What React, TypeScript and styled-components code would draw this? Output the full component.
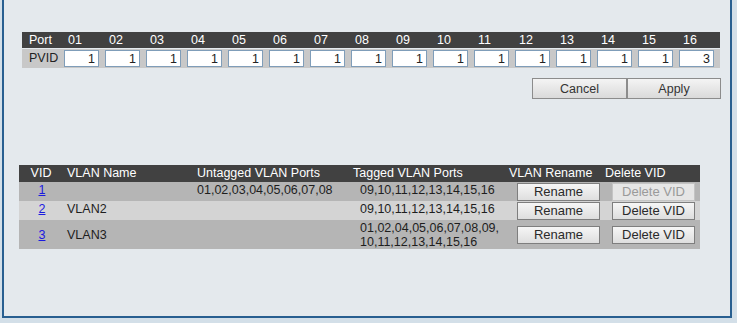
import { Fragment } from 'react';
import styled, { createGlobalStyle } from 'styled-components';

const GlobalStyle = createGlobalStyle`
  html, body {
    margin: 0;
    padding: 0;
    background: #d3dfe8;
    font-family: 'Liberation Sans', Arial, sans-serif;
    font-size: 12px;
  }
`;

const Page = styled.div`
  height: 323px;
  overflow: hidden;
  padding-left: 2px;
`;

const Panel = styled.div`
  box-sizing: border-box;
  width: 730px;
  height: 318px;
  padding: 32px 0 0 18px;
  background: #e4e9ed;
  border: 2px solid #285f90;
  border-top: none;
`;

const PortGrid = styled.div`
  display: grid;
  grid-template-columns: 42px repeat(16, 41px);
  width: 699px;
`;

const HeadCell = styled.div<{ $first?: boolean }>`
  height: 16px;
  line-height: 16px;
  padding-left: ${(p) => (p.$first ? '7px' : '4px')};
  background: #414141;
  color: #fff;
  font-size: 12.5px;
`;

const PvidCell = styled.div<{ $first?: boolean }>`
  height: 19px;
  padding: 1px 0 0 ${(p) => (p.$first ? '7px' : '0')};
  box-sizing: border-box;
  margin-top: 1px;
  background: #c8c8c8;
  color: #222;
  line-height: 17px;
  font-size: 12.5px;
`;

const PvidInput = styled.input`
  box-sizing: border-box;
  width: 35px;
  height: 17px;
  margin: 0;
  padding: 0 3px 0 0;
  border: 1px solid #7f9db9;
  background: #fff;
  text-align: right;
  font-family: 'Liberation Sans', Arial, sans-serif;
  font-size: 12.5px;
  color: #222;
`;

const ActionRow = styled.div`
  display: flex;
  justify-content: flex-end;
  width: 699px;
  margin-top: 10px;
`;

const ActionButton = styled.button<{ $w: number }>`
  box-sizing: border-box;
  width: ${(p) => p.$w}px;
  height: 21px;
  margin: 0;
  padding: 0;
  border: 1px solid #8c8c8c;
  background: linear-gradient(#f4f4f4, #dadada);
  color: #333;
  font-family: 'Liberation Sans', Arial, sans-serif;
  font-size: 12.5px;
`;

const VlanTable = styled.div`
  display: grid;
  grid-template-columns: 44px 130px 156px 156px 96px 99px;
  width: 681px;
  margin: 66px 0 0 -3px;
`;

const VlanHead = styled.div<{ $center?: boolean }>`
  height: 17px;
  line-height: 17px;
  padding-left: ${(p) => (p.$center ? '0' : '4px')};
  text-align: ${(p) => (p.$center ? 'center' : 'left')};
  background: #414141;
  color: #fff;
  font-size: 12.5px;
  white-space: nowrap;
`;

const VlanCell = styled.div<{ $shade: boolean; $tall: boolean; $pad?: number; $center?: boolean }>`
  display: flex;
  align-items: ${(p) => (p.$tall ? 'center' : 'flex-start')};
  justify-content: ${(p) => (p.$center ? 'center' : 'flex-start')};
  height: ${(p) => (p.$tall ? '29px' : '19px')};
  box-sizing: border-box;
  padding: ${(p) => (p.$tall ? '0' : '1px')} 0 0 ${(p) => p.$pad ?? 4}px;
  background: ${(p) => (p.$shade ? '#b5b5b5' : '#d4d4d4')};
  color: #1e1e1e;
  font-size: 12.5px;
  line-height: 14px;
`;

const PortList = styled.span`
  white-space: pre-line;
`;

const VidLink = styled.a`
  color: #1a1ae0;
  text-decoration: underline;
  padding-left: 2px;
`;

const RowButton = styled.button<{ $off?: boolean }>`
  box-sizing: border-box;
  width: 83px;
  height: 18px;
  margin: 0;
  padding: 0;
  border: 1px solid ${(p) => (p.$off ? '#c4c4c4' : '#7e7e7e')};
  background: ${(p) =>
    p.$off ? '#e6e6e6' : 'linear-gradient(#f6f6f6, #dedede)'};
  color: ${(p) => (p.$off ? '#9a9a9a' : '#2a2a2a')};
  font-family: 'Liberation Sans', Arial, sans-serif;
  font-size: 13px;
  line-height: 16px;
`;

const ports = Array.from({ length: 16 }, (_, i) => String(i + 1).padStart(2, '0'));
const pvids = ports.map((_, i) => (i === 15 ? '3' : '1'));

const vlans = [
  { vid: 1, name: '', untagged: '01,02,03,04,05,06,07,08', tagged: '09,10,11,12,13,14,15,16', canDelete: false },
  { vid: 2, name: 'VLAN2', untagged: '', tagged: '09,10,11,12,13,14,15,16', canDelete: true },
  { vid: 3, name: 'VLAN3', untagged: '', tagged: '01,02,04,05,06,07,08,09,\n10,11,12,13,14,15,16', canDelete: true },
];

const App = () => {
  return (
    <Page>
      <GlobalStyle />
      <Panel>
        <PortGrid>
          <HeadCell $first>Port</HeadCell>
          {ports.map((p) => (
            <HeadCell key={p}>{p}</HeadCell>
          ))}
          <PvidCell $first>PVID</PvidCell>
          {pvids.map((v, idx) => (
            <PvidCell key={idx}>
              <PvidInput type='text' defaultValue={v} />
            </PvidCell>
          ))}
        </PortGrid>
        <ActionRow>
          <ActionButton $w={95}>Cancel</ActionButton>
          <ActionButton $w={94}>Apply</ActionButton>
        </ActionRow>
        <VlanTable>
          <VlanHead $center>VID</VlanHead>
          <VlanHead>VLAN Name</VlanHead>
          <VlanHead>Untagged VLAN Ports</VlanHead>
          <VlanHead>Tagged VLAN Ports</VlanHead>
          <VlanHead>VLAN Rename</VlanHead>
          <VlanHead>Delete VID</VlanHead>
          {vlans.map((v, idx) => {
            const shade = idx % 2 === 0;
            const tall = v.tagged.includes('\n');
            return (
              <Fragment key={v.vid}>
                <VlanCell $shade={shade} $tall={tall} $pad={0} $center>
                  <VidLink href='#'>{v.vid}</VidLink>
                </VlanCell>
                <VlanCell $shade={shade} $tall={tall}>{v.name}</VlanCell>
                <VlanCell $shade={shade} $tall={tall}>{v.untagged}</VlanCell>
                <VlanCell $shade={shade} $tall={tall} $pad={11}>
                  <PortList>{v.tagged}</PortList>
                </VlanCell>
                <VlanCell $shade={shade} $tall={tall} $pad={12}>
                  <RowButton>Rename</RowButton>
                </VlanCell>
                <VlanCell $shade={shade} $tall={tall} $pad={11}>
                  <RowButton $off={!v.canDelete}>Delete VID</RowButton>
                </VlanCell>
              </Fragment>
            );
          })}
        </VlanTable>
      </Panel>
    </Page>
  );
};

export default App;
